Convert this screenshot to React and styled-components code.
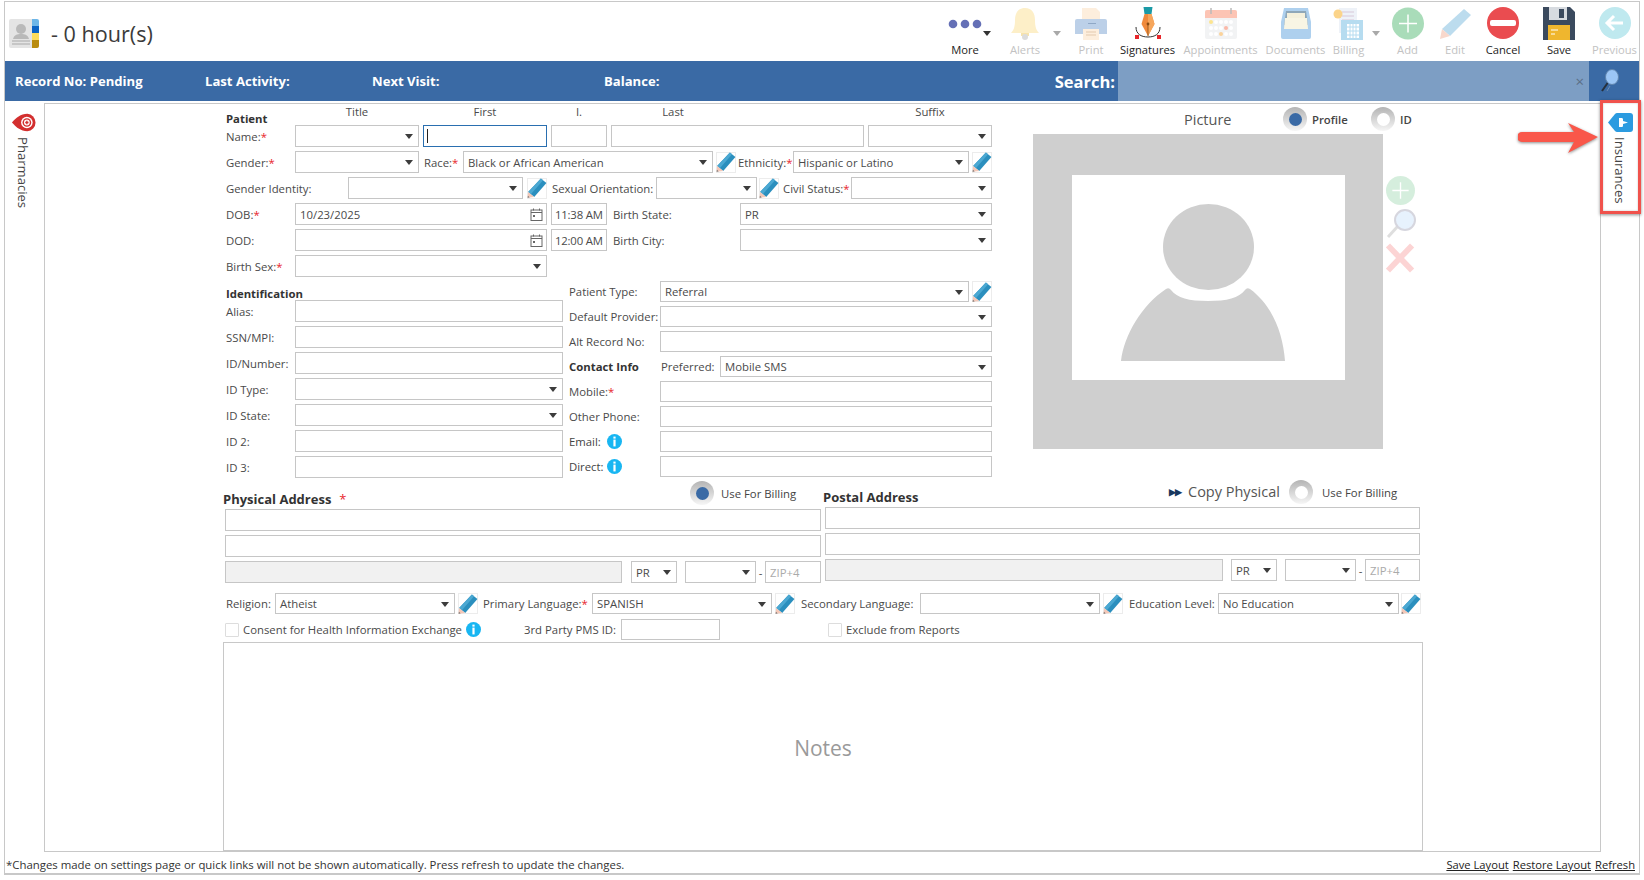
import styled, { createGlobalStyle, css } from 'styled-components'

const GlobalStyle = createGlobalStyle`
  html, body { margin: 0; padding: 0; background: #fff; overflow: hidden; }
  body { font-family: 'Open Sans', 'Liberation Sans', sans-serif; font-size: 11.35px; color: #4a4a4a; }
  * { box-sizing: border-box; }
`

const sized = css`
  flex: none;
  width: ${(p) => (p.$w ? `${p.$w}px` : 'auto')};
  margin-left: ${(p) => p.$ml || 0}px;
`

const Frame = styled.div`
  margin: 1px 0 0 4px;
  width: 1636px;
  height: 874px;
  border: 1px solid #c8c8c8;
  border-bottom-width: 2px;
  display: flex;
  flex-direction: column;
  position: relative;
`

/* top toolbar */
const Header = styled.header`
  height: 59px;
  display: flex;
  align-items: center;
  flex: none;
`
const PageTitle = styled.div`
  display: flex;
  align-items: center;
  gap: 12px;
  padding-left: 4px;
  font-size: 21.6px;
  color: #3b3b3b;
  margin-top: 3px;
`
const Tools = styled.div`
  margin-left: auto;
  display: flex;
  padding-right: 1px;
  height: 59px;
`
const Tool = styled.div`
  ${sized}
  position: relative;
  display: flex;
  flex-direction: column;
  align-items: center;
  padding-top: 5px;
  font-size: 11.2px;
  white-space: nowrap;
  color: ${(p) => (p.$off ? '#c2c2c2' : '#222')};
  svg { display: block; height: 33px; flex: none; }
  span { margin-top: 2px; line-height: 15px; }
`
const Caret = styled.i`
  position: absolute;
  right: ${(p) => p.$r}px;
  top: 29px;
  border: 4px solid transparent;
  border-top: 5px solid ${(p) => (p.$off ? '#a9a9a9' : '#333')};
  border-bottom: 0;
`

/* blue record bar */
const RecordBar = styled.div`
  height: 40px;
  flex: none;
  background: #3a6aa5;
  color: #fff;
  display: flex;
  align-items: center;
  font-weight: 700;
  font-size: 13.1px;
`
const BarItem = styled.div`
  ${sized}
  white-space: nowrap;
`
const SearchLabel = styled.div`
  ${sized}
  font-size: 16.5px;
  text-align: right;
  padding-right: 3px;
`
const SearchBox = styled.div`
  width: 471px;
  height: 40px;
  background: #7d9ec4;
  display: flex;
  align-items: center;
  justify-content: flex-end;
  padding-right: 5px;
  color: #5b6f87;
  font-weight: 400;
  font-size: 15px;
`
const SearchButton = styled.div`
  flex: 1;
  display: flex;
  justify-content: center;
  padding-right: 8px;
`

/* body with the two side tabs */
const Body = styled.div`
  flex: 1;
  display: flex;
  padding-top: 2px;
  min-height: 0;
`
const SideTab = styled.div`
  flex: none;
  width: ${(p) => p.$w}px;
  display: flex;
  flex-direction: column;
  align-items: center;
  padding-top: 10px;
  padding-right: ${(p) => p.$pr || 0}px;
`
const VerticalText = styled.div`
  writing-mode: vertical-rl;
  font-size: 13.1px;
  margin-top: 5px;
  color: #444;
`
const Main = styled.main`
  width: 1557px;
  height: 749px;
  flex: none;
  border: 1px solid #c8c8c8;
  padding-left: 178px;
  display: flex;
  flex-direction: column;
`

/* form pieces */
const TopArea = styled.div`
  display: flex;
  height: 375px;
  flex: none;
`
const FormCol = styled.div`
  width: 766px;
  margin-left: 3px;
  flex: none;
`
const TitleRow = styled.div`
  display: flex;
  height: 21px;
`
const GroupTitle = styled.div`
  ${sized}
  font-weight: 700;
  color: #333;
  align-self: ${(p) => (p.$middle ? 'center' : 'flex-end')};
  margin-bottom: ${(p) => (p.$middle ? 0 : -1)}px;
  line-height: 14px;
  white-space: nowrap;
`
const ColTitle = styled.div`
  ${sized}
  text-align: center;
  line-height: 14px;
  padding-top: 1px;
`
const Rows = styled.div`
  display: flex;
  flex-direction: column;
  gap: ${(p) => p.$gap}px;
`
const Row = styled.div`
  display: flex;
  align-items: center;
  height: ${(p) => p.$h || 22}px;
  margin-left: ${(p) => p.$ml || 0}px;
  margin-top: ${(p) => p.$mt || 0}px;
`
const Label = styled.label`
  ${sized}
  white-space: nowrap;
  display: flex;
  align-items: center;
  em { color: #e8262b; font-style: normal; }
`
const fieldBox = css`
  ${sized}
  height: 100%;
  border: 1px solid #c6c6c6;
  background: #fff;
  color: #4a4a4a;
  font-family: inherit;
  font-size: 11.35px;
  display: flex;
  align-items: center;
  padding: 0 4px;
  outline: none;
`
const Input = styled.input`
  ${fieldBox}
  ${(p) => p.$disabled && 'background: #f1f1f1;'}
  &::placeholder { color: #aaa; }
`
const ActiveInput = styled.div`
  ${fieldBox}
  border-color: #2a6fb0;
  padding-left: 3px;
`
const TimeInput = styled(Input)`
  padding: 0 0 0 3px;
  letter-spacing: -0.2px;
`
const SelectBox = styled.div`
  ${fieldBox}
  position: relative;
  &::after {
    content: '';
    position: absolute;
    right: 5px;
    top: 50%;
    margin-top: -2px;
    border: 4px solid transparent;
    border-top: 5px solid #3c3c3c;
    border-bottom: 0;
  }
`
const DateBox = styled.div`
  ${fieldBox}
  justify-content: space-between;
  padding-right: 3px;
`
const TextCursor = styled.i`
  width: 1px;
  height: 14px;
  background: #222;
`
const EditButton = styled.button`
  ${sized}
  width: 20px;
  height: 21px;
  padding: 0;
  border: 1px solid #ececec;
  background: #fff;
  display: flex;
  align-items: center;
  justify-content: center;
  svg { flex: none; }
`
const Split = styled.div`
  display: flex;
  margin-top: 4px;
`
const IdCol = styled.div`
  width: 337px;
  flex: none;
`
const ContactCol = styled.div`
  width: 423px;
  margin-left: 6px;
  flex: none;
`

/* picture column */
const PictureCol = styled.div`
  margin-left: 41px;
  width: 351px;
  flex: none;
`
const PictureHead = styled.div`
  height: 30px;
  display: flex;
  align-items: center;
`
const PictureTitle = styled.div`
  font-size: 14.5px;
  width: 176px;
  padding-left: 151px;
  white-space: nowrap;
  color: #555;
`
const Option = styled.div`
  ${sized}
  display: flex;
  align-items: center;
  gap: ${(p) => p.$gap || 5}px;
  white-space: nowrap;
  font-weight: ${(p) => (p.$bold ? 600 : 400)};
  color: #444;
  svg { flex: none; }
`
const BillingOption = styled(Option)`
  align-self: flex-start;
  margin-top: ${(p) => p.$mt}px;
`
const RadioRing = styled.span`
  flex: none;
  width: 24px;
  height: 24px;
  border-radius: 50%;
  background: linear-gradient(#b4b4b4, #f6f6f6);
  display: flex;
  align-items: center;
  justify-content: center;
  &::after {
    content: '';
    width: 13px;
    height: 13px;
    border-radius: 50%;
    background: ${(p) => (p.$on ? '#3a6aa5' : '#fff')};
  }
`
const PictureRow = styled.div`
  display: flex;
`
const PictureFrame = styled.div`
  width: 350px;
  height: 315px;
  background: #cfcfcf;
  flex: none;
  padding: 41px 39px 0;
`
const PictureInner = styled.div`
  width: 273px;
  height: 205px;
  background: #fff;
  overflow: hidden;
`
const PictureTools = styled.div`
  flex: none;
  display: flex;
  flex-direction: column;
  gap: 4px;
  margin: 42px 0 0 3px;
  opacity: 0.48;
`

/* addresses */
const AddressArea = styled.div`
  display: flex;
  height: 114px;
  flex: none;
`
const AddressCol = styled.div`
  flex: none;
  width: ${(p) => p.$w}px;
`
const AddressHead = styled.div`
  display: flex;
  align-items: flex-end;
  height: ${(p) => p.$h}px;
`
const SectionTitle = styled.div`
  font-weight: 700;
  font-size: 13px;
  color: #333;
  white-space: nowrap;
  padding-bottom: 1px;
  ${sized}
  em { color: #e8262b; font-style: normal; font-weight: 400; margin-left: 8px; }
`
const CopyLink = styled.div`
  ${sized}
  align-self: flex-start;
  margin-top: 3px;
  font-size: 14.5px;
  color: #555;
  display: flex;
  align-items: center;
  gap: 7px;
  white-space: nowrap;
  b { color: #17375e; font-size: 9px; letter-spacing: -1px; }
`
const Dash = styled.span`
  ${sized}
  text-align: center;
`

const Check = styled.span`
  ${sized}
  width: 14px;
  height: 14px;
  border: 1px solid #ddd;
  border-radius: 1px;
  background: #fff;
`
const CheckText = styled.span`
  ${sized}
  white-space: nowrap;
`
const Notes = styled.section`
  width: 1200px;
  height: 209px;
  margin-top: 2px;
  border: 1px solid #c8c8c8;
  flex: none;
  display: flex;
  align-items: center;
  justify-content: center;
  padding-top: 2px;
  font-size: 21px;
  color: #9a9a9a;
`

/* footer */
const Footer = styled.footer`
  flex: none;
  height: 22px;
  display: flex;
  align-items: center;
  justify-content: space-between;
  padding: 5px 4px 0 1px;
  font-size: 11.4px;
  color: #333;
`
const FooterLinks = styled.div`
  display: flex;
  gap: 4px;
  font-size: 11.2px;
  a { color: #222; text-decoration: underline; }
`

/* annotation drawn on top of the screenshot */
const Highlight = styled.div`
  position: absolute;
  left: 1595px;
  top: 98px;
  width: 41px;
  height: 114px;
  border: 3px solid #f0524c;
  box-shadow: 0 1px 3px rgba(0, 0, 0, 0.45), inset 0 0 2px rgba(0, 0, 0, 0.25);
`
const ArrowMark = styled.svg`
  position: absolute;
  left: 1513px;
  top: 120px;
  filter: drop-shadow(0 1px 1.5px rgba(0, 0, 0, 0.45));
`

const Pencil = () => (
  <svg width="20" height="20" viewBox="0 0 18 18">
    <path d="M12.500 .5 17.500 4.500 6.500 17 1 12.500z" fill="#2b8fbe" />
    <path d="M12.500 .5 14.500 2.100 3.500 14.600 1 12.500z" fill="#4ba8d2" />
    <path d="M1 12.500 6.500 17 .5 17.800z" fill="#f4c8b8" />
    <path d="M.5 17.800 2.400 17.500 .9 15.900z" fill="#777" />
  </svg>
)

const InfoIcon = () => (
  <svg width="15" height="15" viewBox="0 0 15 15">
    <circle cx="7.5" cy="7.5" r="7.5" fill="#18b6f2" />
    <rect x="6.4" y="2.6" width="2.2" height="2" fill="#fff" />
    <rect x="6.4" y="5.6" width="2.2" height="6.8" fill="#fff" />
  </svg>
)

const CalendarIcon = () => (
  <svg width="13" height="13" viewBox="0 0 13 13" fill="none" stroke="#666">
    <rect x="1" y="2" width="11" height="10.5" />
    <path d="M1 4.5h11M3.5 .5v2M9.5 .5v2" />
    <rect x="3" y="7" width="2" height="2" fill="#666" stroke="none" />
  </svg>
)

const Arrow = () => (
  <ArrowMark width="82" height="32" viewBox="0 0 82 32">
    <path d="M50 1 80 15 50 31 56 20H4a4.5 4.5 0 0 1 0-10h52z" fill="#f9574a" />
  </ArrowMark>
)

const DropMark = () => (
  <svg width="25" height="19" viewBox="0 0 26 19">
    <path d="M1 9.500C5 5 10 .5 17 .5a8.500 9 0 0 1 0 18c-7 0-12-4.500-16-9z" fill="#d32f2f" />
    <circle cx="16.500" cy="9.500" r="6" fill="#fff" />
    <circle cx="16.500" cy="9.500" r="4.500" fill="#d32f2f" />
    <circle cx="16.500" cy="9.500" r="3" fill="#fff" />
    <path d="M15.800 7.800h1.400v1h1v1.400h-1v1h-1.400v-1h-1v-1.400h1z" fill="#d32f2f" />
  </svg>
)

const ShieldMark = () => (
  <svg width="25" height="19" viewBox="0 0 25 19">
    <path d="M0 9.500 7 1q1-1 2-1h13q3 0 3 3v13q0 3-3 3H9q-1 0-2-1z" fill="#2b9be0" />
    <path d="M11 5h3q1 0 1 1.500V8l5 1.500-5 1.500v1.500q0 1.500-1 1.500h-3z" fill="#fff" />
  </svg>
)

const PatientIcon = () => (
  <svg width="30" height="29" viewBox="0 0 30 29">
    <rect width="26" height="29" rx="2" fill="#e4e4e4" />
    <circle cx="12" cy="10" r="5" fill="#b9b9b9" />
    <path d="M4 20c1-4 4-5 8-5s7 1 8 5z" fill="#b9b9b9" />
    <path d="M3 22h18M3 25h18" stroke="#a8a8a8" />
    <path d="M23 0h5a2 2 0 0 1 2 2v5h-7z" fill="#6db6e8" />
    <rect x="23" y="7" width="7" height="7" fill="#0b63c4" />
    <rect x="23" y="14" width="7" height="7" fill="#fddc5c" />
    <path d="M23 21h7v6a2 2 0 0 1-2 2h-5z" fill="#b98c10" />
  </svg>
)

const DotsIcon = () => (
  <svg width="34" viewBox="0 0 34 33">
    <circle cx="5" cy="17" r="4.300" fill="#6570b6" />
    <circle cx="17" cy="17" r="4.300" fill="#6570b6" />
    <circle cx="29" cy="17" r="4.300" fill="#6570b6" />
  </svg>
)
const BellIcon = () => (
  <svg viewBox="0 0 30 33" width="30">
    <path d="M15 1c7 0 10 5 10 12 0 6 1 10 4 13H1c3-3 4-7 4-13C5 6 8 1 15 1z" fill="#fdefc8" />
    <rect x="11" y="26" width="8" height="3" fill="#f7e3ac" />
    <circle cx="15" cy="30" r="3" fill="#dcdcdc" />
  </svg>
)
const PrinterIcon = () => (
  <svg viewBox="0 0 34 33" width="34">
    <path d="M8 1h14l4 4v11H8z" fill="#fdeedd" />
    <path d="M3 12h28a2 2 0 0 1 2 2v13H1V14a2 2 0 0 1 2-2z" fill="#bcd0e8" />
    <rect x="14" y="16" width="8" height="1" fill="#8fa8c6" />
    <rect x="9" y="22" width="16" height="11" fill="#fdeedd" />
    <path d="M12 25h10M12 28h10" stroke="#e3c9ae" />
  </svg>
)
const NibIcon = () => (
  <svg viewBox="0 0 28 33" width="28">
    <path d="M2 20c0 7 5 10 12 10s12-3 12-10" fill="none" stroke="#333" strokeWidth="1" />
    <rect x="1" y="28" width="4" height="4" fill="#e8262b" />
    <rect x="23" y="28" width="4" height="4" fill="#e8262b" />
    <path d="M9.500 0h9l-1 7h-7z" fill="#1b9aa6" />
    <path d="M10.500 7h7l3 10-6.500 12L7.500 17z" fill="#f08a3c" />
    <path d="M14 7h3.500l3 10-6.500 12z" fill="#f6a65c" />
    <path d="M14 16v13" stroke="#8a4b12" strokeWidth=".8" />
    <circle cx="14" cy="17" r="1.400" fill="#8a4b12" />
  </svg>
)
const CalIcon = () => (
  <svg viewBox="0 0 32 33" width="32">
    <rect y="3" width="32" height="29" rx="2" fill="#f2f3f4" />
    <path d="M0 5a2 2 0 0 1 2-2h28a2 2 0 0 1 2 2v6H0z" fill="#fcc4b4" />
    <path d="M6 1v6M26 1v6" stroke="#bbb" strokeWidth="1.500" />
    {[0, 1, 2, 3, 4].map((c) => [0, 1, 2].map((r) => (
      <circle key={`${c}${r}`} cx={6 + c * 5} cy={15 + r * 6} r="2"
        fill={c === 0 && r === 0 ? '#fde58f' : c === 3 && r === 1 ? '#fbb9a8' : c === 2 && r === 2 ? '#fbd39a' : '#fff'} />
    )))}
  </svg>
)
const TrayIcon = () => (
  <svg viewBox="0 0 34 33" width="34">
    <path d="M5 1h24l3 14v15a2 2 0 0 1-2 2H4a2 2 0 0 1-2-2V15z" fill="#aed0ee" />
    <path d="M7 4h20l2 14H5z" fill="#8fa7b8" />
    <rect x="8" y="6" width="18" height="5" fill="#f4f0dc" />
    <path d="M6 11h22l1 11H5z" fill="#f8f5e4" />
  </svg>
)
const BillingIcon = () => (
  <svg viewBox="0 0 32 33" width="32">
    <rect x="6" y="1" width="18" height="25" fill="#eef2f8" />
    <path d="M9 5h12M9 9h12M9 13h12" stroke="#d8c8d8" />
    <circle cx="5" cy="7" r="4.500" fill="#fbd48a" />
    <rect x="8" y="13" width="22" height="20" fill="#b6dcf0" />
    <rect x="14" y="17" width="12" height="14" fill="#fff" />
    <path d="M17 17v14M20 17v14M23 17v14M14 20h12M14 24h12M14 28h12" stroke="#b6dcf0" />
  </svg>
)
const PlusCircle = ({ size = 32 }) => (
  <svg viewBox="0 0 32 32" width={size}>
    <circle cx="16" cy="16" r="16" fill="#a9dcb9" />
    <path d="M16 7v18M7 16h18" stroke="#fff" strokeWidth="1.500" />
  </svg>
)
const PaleEdit = () => (
  <svg viewBox="0 0 32 33" width="32">
    <path d="M25 2 32 8 11 29 3 22z" fill="#bcdcee" />
    <path d="M3 22l8 7-10 3z" fill="#f8d8cc" />
  </svg>
)
const CancelIcon = () => (
  <svg viewBox="0 0 32 33" width="32">
    <circle cx="16" cy="16" r="16" fill="#ea4c50" />
    <rect x="3" y="13" width="26" height="6" rx="2" fill="#fff" />
  </svg>
)
const SaveIcon = () => (
  <svg viewBox="0 0 32 33" width="32">
    <path d="M0 0h27l5 5v28H0z" fill="#3b4a5e" />
    <rect x="6" y="0" width="18" height="13" fill="#d7dbe0" />
    <rect x="16" y="2" width="5" height="9" fill="#3b4a5e" />
    <rect x="5" y="18" width="22" height="15" fill="#efb62e" />
    <path d="M8 23h7M8 27h4" stroke="#fff" />
  </svg>
)
const BackIcon = () => (
  <svg viewBox="0 0 32 33" width="32">
    <circle cx="16" cy="16" r="16" fill="#bfe9ef" />
    <path d="M24 16H8M15 9l-7 7 7 7" fill="none" stroke="#fff" strokeWidth="3" />
  </svg>
)
const LensIcon = () => (
  <svg viewBox="0 0 30 30" width="30" height="30">
    <path d="M2 28 12 17" stroke="#bbb" strokeWidth="3" />
    <circle cx="19" cy="11" r="10" fill="#cfe4fb" stroke="#aab" strokeWidth="2" />
  </svg>
)
const SearchLens = () => (
  <svg viewBox="0 0 20 24" width="20" height="24">
    <path d="M2 22 9 12" stroke="#26303c" strokeWidth="2" />
    <path d="M7 22l3-5" stroke="#6f8db0" strokeWidth="1" />
    <ellipse cx="12" cy="8" rx="6.500" ry="7.500" fill="#9cc6f5" stroke="#5f84ad" />
  </svg>
)
const CrossIcon = () => (
  <svg viewBox="0 0 30 30" width="29" height="30">
    <path d="M2 2 27 28M27 2 2 28" stroke="#f9a6a6" strokeWidth="6" />
  </svg>
)
const Avatar = () => (
  <svg width="273" height="206" viewBox="0 0 273 206">
    <ellipse cx="136.500" cy="72" rx="45.500" ry="43" fill="#cfcfcf" />
    <path d="M49 186C52 160 70 130 94 114q3-2 5 1c6 8 18 11 37 11s31-3 37-11q2-3 5-1c22 16 33 44 35 72z" fill="#cfcfcf" />
  </svg>
)

const tools = [
  { label: 'More', w: 40, ml: 0, icon: <DotsIcon />, caret: -6 },
  { label: 'Alerts', w: 40, ml: 20, off: true, icon: <BellIcon />, caret: -16 },
  { label: 'Print', w: 42, ml: 25, off: true, icon: <PrinterIcon /> },
  { label: 'Signatures', w: 59, ml: 6, icon: <NibIcon /> },
  { label: 'Appointments', w: 79, ml: 4, off: true, icon: <CalIcon /> },
  { label: 'Documents', w: 63, ml: 4, off: true, icon: <TrayIcon /> },
  { label: 'Billing', w: 35, ml: 4, off: true, icon: <BillingIcon />, caret: -14 },
  { label: 'Add', w: 35, ml: 24, off: true, icon: <PlusCircle /> },
  { label: 'Edit', w: 34, ml: 13, off: true, icon: <PaleEdit /> },
  { label: 'Cancel', w: 42, ml: 10, icon: <CancelIcon /> },
  { label: 'Save', w: 38, ml: 16, icon: <SaveIcon /> },
  { label: 'Previous', w: 47, ml: 13, off: true, icon: <BackIcon /> },
]

const Req = () => <em>*</em>

const App = () => (
  <Frame>
    <GlobalStyle />
    <Header>
      <PageTitle>
        <PatientIcon />
        <span>- 0 hour(s)</span>
      </PageTitle>
      <Tools>
        {tools.map((t) => (
          <Tool key={t.label} $w={t.w} $ml={t.ml} $off={t.off}>
            {t.icon}
            <span>{t.label}</span>
            {t.caret !== undefined && <Caret $r={t.caret} $off={t.off} />}
          </Tool>
        ))}
      </Tools>
    </Header>

    <RecordBar>
      <BarItem $w={190} $ml={10}>Record No: Pending</BarItem>
      <BarItem $w={167}>Last Activity:</BarItem>
      <BarItem $w={232}>Next Visit:</BarItem>
      <BarItem $w={100}>Balance:</BarItem>
      <SearchLabel $w={414}>Search:</SearchLabel>
      <SearchBox>×</SearchBox>
      <SearchButton><SearchLens /></SearchButton>
    </RecordBar>

    <Body>
      <SideTab $w={39} $pr={3}>
        <DropMark />
        <VerticalText>Pharmacies</VerticalText>
      </SideTab>
      <Main>
        <TopArea>
          <FormCol>
            <TitleRow>
              <GroupTitle $w={69}>Patient</GroupTitle>
              <ColTitle $w={124}>Title</ColTitle>
              <ColTitle $w={124} $ml={4}>First</ColTitle>
              <ColTitle $w={56} $ml={4}>I.</ColTitle>
              <ColTitle $w={124} $ml={4}>Last</ColTitle>
              <ColTitle $w={124} $ml={133}>Suffix</ColTitle>
            </TitleRow>
            <Rows $gap={4}>
              <Row>
                <Label $w={69}>Name:<Req /></Label>
                <SelectBox $w={124} />
                <ActiveInput $w={124} $ml={4}><TextCursor /></ActiveInput>
                <Input $w={56} $ml={4} />
                <Input $w={253} $ml={4} />
                <SelectBox $w={124} $ml={4} />
              </Row>
              <Row>
                <Label $w={69}>Gender:<Req /></Label>
                <SelectBox $w={124} />
                <Label $w={39} $ml={5}>Race:<Req /></Label>
                <SelectBox $w={250}>Black or African American</SelectBox>
                <EditButton $ml={3}><Pencil /></EditButton>
                <Label $w={55} $ml={2}>Ethnicity:<Req /></Label>
                <SelectBox $w={176}>Hispanic or Latino</SelectBox>
                <EditButton $ml={3}><Pencil /></EditButton>
              </Row>
              <Row>
                <Label $w={122}>Gender Identity:</Label>
                <SelectBox $w={175} />
                <EditButton $ml={4}><Pencil /></EditButton>
                <Label $w={104} $ml={5}>Sexual Orientation:</Label>
                <SelectBox $w={101} />
                <EditButton $ml={2}><Pencil /></EditButton>
                <Label $w={68} $ml={4}>Civil Status:<Req /></Label>
                <SelectBox $w={141} />
              </Row>
              <Row>
                <Label $w={69}>DOB:<Req /></Label>
                <DateBox $w={252}>10/23/2025<CalendarIcon /></DateBox>
                <TimeInput $w={56} $ml={4} defaultValue="11:38 AM" />
                <Label $w={127} $ml={6}>Birth State:</Label>
                <SelectBox $w={252}>PR</SelectBox>
              </Row>
              <Row>
                <Label $w={69}>DOD:</Label>
                <DateBox $w={252}><span /><CalendarIcon /></DateBox>
                <TimeInput $w={56} $ml={4} defaultValue="12:00 AM" />
                <Label $w={127} $ml={6}>Birth City:</Label>
                <SelectBox $w={252} />
              </Row>
              <Row>
                <Label $w={69}>Birth Sex:<Req /></Label>
                <SelectBox $w={252} />
              </Row>
            </Rows>

            <Split>
              <IdCol>
                <Row $h={19}>
                  <GroupTitle $w={120}>Identification</GroupTitle>
                </Row>
                <Rows $gap={4}>
                  <Row><Label $w={69}>Alias:</Label><Input $w={268} /></Row>
                  <Row><Label $w={69}>SSN/MPI:</Label><Input $w={268} /></Row>
                  <Row><Label $w={69}>ID/Number:</Label><Input $w={268} /></Row>
                  <Row><Label $w={69}>ID Type:</Label><SelectBox $w={268} /></Row>
                  <Row><Label $w={69}>ID State:</Label><SelectBox $w={268} /></Row>
                  <Row><Label $w={69}>ID 2:</Label><Input $w={268} /></Row>
                  <Row><Label $w={69}>ID 3:</Label><Input $w={268} /></Row>
                </Rows>
              </IdCol>
              <ContactCol>
                <Rows $gap={4}>
                  <Row $h={21}>
                    <Label $w={91}>Patient Type:</Label>
                    <SelectBox $w={309}>Referral</SelectBox>
                    <EditButton $ml={3}><Pencil /></EditButton>
                  </Row>
                  <Row $h={21}><Label $w={91}>Default Provider:</Label><SelectBox $w={332} /></Row>
                  <Row $h={21}><Label $w={91}>Alt Record No:</Label><Input $w={332} /></Row>
                  <Row $h={21}>
                    <GroupTitle $w={92} $middle>Contact Info</GroupTitle>
                    <Label $w={59}>Preferred:</Label>
                    <SelectBox $w={272}>Mobile SMS</SelectBox>
                  </Row>
                  <Row $h={21}><Label $w={91}>Mobile:<Req /></Label><Input $w={332} /></Row>
                  <Row $h={21}><Label $w={91}>Other Phone:</Label><Input $w={332} /></Row>
                  <Row $h={21}>
                    <Option $w={91} $gap={6}>Email: <InfoIcon /></Option>
                    <Input $w={332} />
                  </Row>
                  <Row $h={21}>
                    <Option $w={91} $gap={3}>Direct: <InfoIcon /></Option>
                    <Input $w={332} />
                  </Row>
                </Rows>
              </ContactCol>
            </Split>
          </FormCol>

          <PictureCol>
            <PictureHead>
              <PictureTitle>Picture</PictureTitle>
              <Option $w={88} $ml={74} $bold><RadioRing $on />Profile</Option>
              <Option $bold><RadioRing />ID</Option>
            </PictureHead>
            <PictureRow>
              <PictureFrame>
                <PictureInner><Avatar /></PictureInner>
              </PictureFrame>
              <PictureTools>
                <PlusCircle size={29} />
                <LensIcon />
                <CrossIcon />
              </PictureTools>
            </PictureRow>
          </PictureCol>
        </TopArea>

        <AddressArea>
          <AddressCol $w={600}>
            <AddressHead $h={30}>
              <SectionTitle $w={467}>Physical Address<em>*</em></SectionTitle>
              <BillingOption $gap={7} $mt={2}><RadioRing $on />Use For Billing</BillingOption>
            </AddressHead>
            <Rows $gap={4}>
              <Row $ml={2}><Input $w={596} /></Row>
              <Row $ml={2}><Input $w={596} /></Row>
              <Row $ml={2}>
                <Input $w={397} $disabled />
                <SelectBox $w={46} $ml={9}>PR</SelectBox>
                <SelectBox $w={71} $ml={8} />
                <Dash $w={9}>-</Dash>
                <Input $w={56} placeholder="ZIP+4" />
              </Row>
            </Rows>
          </AddressCol>
          <AddressCol $w={600}>
            <AddressHead $h={28}>
              <SectionTitle $w={346}>Postal Address</SectionTitle>
              <CopyLink $w={120}><b>▶▶</b>Copy Physical</CopyLink>
              <BillingOption $gap={9} $mt={1}><RadioRing />Use For Billing</BillingOption>
            </AddressHead>
            <Rows $gap={4}>
              <Row $ml={2}><Input $w={595} /></Row>
              <Row $ml={2}><Input $w={595} /></Row>
              <Row $ml={2}>
                <Input $w={398} $disabled />
                <SelectBox $w={46} $ml={8}>PR</SelectBox>
                <SelectBox $w={71} $ml={8} />
                <Dash $w={9}>-</Dash>
                <Input $w={55} placeholder="ZIP+4" />
              </Row>
            </Rows>
          </AddressCol>
        </AddressArea>

        <Row $ml={3}>
          <Label $w={49}>Religion:</Label>
          <SelectBox $w={180}>Atheist</SelectBox>
          <EditButton $ml={3}><Pencil /></EditButton>
          <Label $w={109} $ml={5}>Primary Language:<Req /></Label>
          <SelectBox $w={180}>SPANISH</SelectBox>
          <EditButton $ml={3}><Pencil /></EditButton>
          <Label $w={119} $ml={6}>Secondary Language:</Label>
          <SelectBox $w={180} />
          <EditButton $ml={3}><Pencil /></EditButton>
          <Label $w={89} $ml={6}>Education Level:</Label>
          <SelectBox $w={181}>No Education</SelectBox>
          <EditButton $ml={2}><Pencil /></EditButton>
        </Row>
        <Row $h={21} $ml={2} $mt={5}>
          <Check />
          <CheckText $w={223} $ml={4}>Consent for Health Information Exchange</CheckText>
          <InfoIcon />
          <CheckText $w={97} $ml={43}>3rd Party PMS ID:</CheckText>
          <Input $w={99} />
          <Check $ml={108} />
          <CheckText $ml={4}>Exclude from Reports</CheckText>
        </Row>
        <Notes>Notes</Notes>
      </Main>
      <SideTab $w={38}>
        <ShieldMark />
        <VerticalText>Insurances</VerticalText>
      </SideTab>
    </Body>

    <Footer>
      <span>*Changes made on settings page or quick links will not be shown automatically. Press refresh to update the changes.</span>
      <FooterLinks>
        <a>Save Layout</a>
        <a>Restore Layout</a>
        <a>Refresh</a>
      </FooterLinks>
    </Footer>

    <Highlight />
    <Arrow />
  </Frame>
)

export default App
